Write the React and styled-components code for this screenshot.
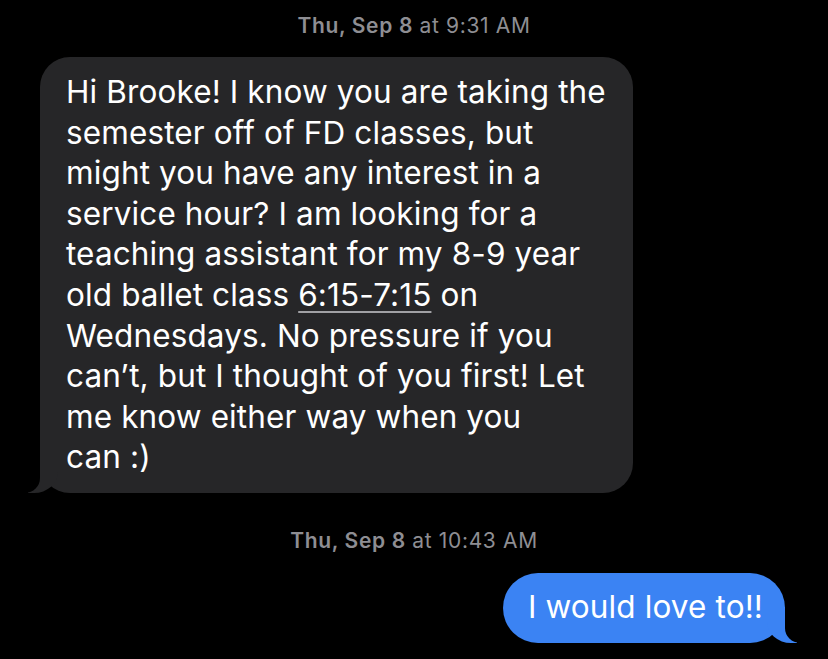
import React from 'react';
import styled, { createGlobalStyle } from 'styled-components';

const GlobalStyle = createGlobalStyle`
  html, body {
    margin: 0;
    padding: 0;
    background: #000;
  }
  body {
    font-family: Inter, "Noto Sans", sans-serif;
    -webkit-font-smoothing: antialiased;
  }
`;

const Thread = styled.div`
  width: 828px;
  height: 659px;
  background: #000;
  display: flex;
  flex-direction: column;
  padding: 13px 0 0;
  box-sizing: border-box;
  overflow: hidden;
`;

const Stamp = styled.div`
  align-self: center;
  color: #8e8e93;
  font-size: 21px;
  line-height: 26px;
  letter-spacing: 0.65px;
  margin-top: ${({ top }) => top || 0}px;
  margin-bottom: ${({ gap }) => gap}px;

  b {
    font-weight: 600;
  }
`;

const Bubble = styled.div`
  position: relative;
  box-sizing: border-box;
  color: #fff;
  font-size: 31.5px;
  line-height: 40.6px;
  letter-spacing: 0.12px;
  white-space: nowrap;
  background: ${({ mine }) => (mine ? '#3b83f3' : '#262628')};
  border-radius: ${({ mine }) => (mine ? '35px' : '30px')};
  align-self: ${({ mine }) => (mine ? 'flex-end' : 'flex-start')};
  margin: ${({ mine }) => (mine ? '0 43px 0 0' : '0 0 0 40px')};
  padding: ${({ mine }) => (mine ? '14px 22px 15px 25px' : '15px 10px 15px 26px')};
  width: ${({ mine }) => (mine ? 'auto' : '593px')};

  &::before {
    content: '';
    position: absolute;
    bottom: 0;
    width: 30px;
    height: 36px;
    background: inherit;
    ${({ mine }) =>
      mine
        ? 'right: -12px; border-bottom-left-radius: 24px 21px;'
        : 'left: -12px; border-bottom-right-radius: 24px 21px;'}
  }

  &::after {
    content: '';
    position: absolute;
    bottom: 0;
    width: 40px;
    height: 36px;
    background: #000;
    ${({ mine }) =>
      mine
        ? 'right: -40px; border-bottom-left-radius: 15px;'
        : 'left: -40px; border-bottom-right-radius: 15px;'}
  }
`;

const Time = styled.span`
  text-decoration: underline;
  text-decoration-color: #a0a0a4;
  text-decoration-thickness: 2px;
  text-underline-offset: 5px;
`;

const lines = [
  'Hi Brooke! I know you are taking the',
  'semester off of FD classes, but',
  'might you have any interest in a',
  'service hour? I am looking for a',
  'teaching assistant for my 8-9 year',
];

const App = () => {
  return (
    <>
      <GlobalStyle />
      <Thread>
        <Stamp gap={18}>
          <b>Thu, Sep 8</b> at 9:31 AM
        </Stamp>
        <Bubble>
          {lines.map((l) => (
            <div key={l}>{l}</div>
          ))}
          <div>
            old ballet class <Time>6:15-7:15</Time> on
          </div>
          <div>Wednesdays. No pressure if you</div>
          <div>can’t, but I thought of you first! Let</div>
          <div>me know either way when you</div>
          <div>can :)</div>
        </Bubble>
        <Stamp top={35} gap={19}>
          <b>Thu, Sep 8</b> at 10:43 AM
        </Stamp>
        <Bubble mine>I would love to!!</Bubble>
      </Thread>
    </>
  );
};

export default App;
